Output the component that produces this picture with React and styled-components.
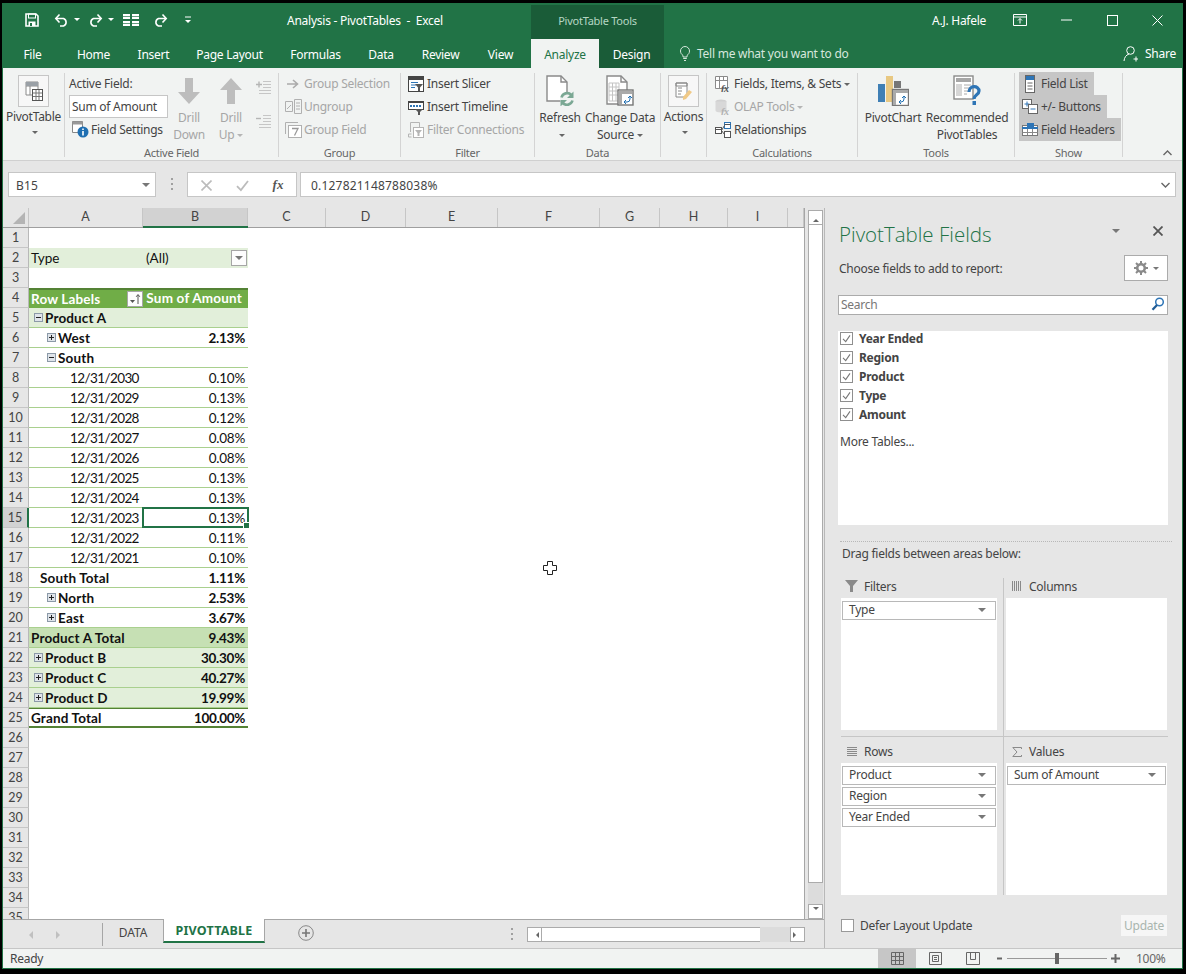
import React from "react";
import styled, { createGlobalStyle } from "styled-components";

const GlobalStyle = createGlobalStyle`
  html, body { margin: 0; padding: 0; background: #000; }
  body { font-family: "Open Sans", "Noto Sans", sans-serif; }
`;

const UI_FONT = `"Noto Sans", "Open Sans", sans-serif`;
const CELL_FONT = `Lato, "Open Sans", sans-serif`;

const Window = styled.div`
  position: relative;
  width: 1179px;
  height: 966px;
  margin: 3px 0 0 2px;
  padding-left: 1px;
  border-right: 1px solid #217346;
  display: flex;
  flex-direction: column;
  overflow: hidden;
  background: #217346;
  font-family: ${UI_FONT};
  font-size: 12px;
  letter-spacing: -0.25px;
  color: #444;
`;

/* title bar + tabs */
const Header = styled.div`
  display: flex;
  height: 65px;
  flex-shrink: 0;
  background: #217346;
  color: #fff;
`;
const HeaderSide = styled.div`
  display: flex;
  flex-direction: column;
  width: ${(p) => (p.$w ? `${p.$w}px` : "auto")};
  flex: ${(p) => (p.$w ? "none" : 1)};
`;
const TitleRow = styled.div`
  display: flex;
  align-items: center;
  box-sizing: border-box;
  height: 36px;
  padding: 0 0 2px ${(p) => p.$pad || 0}px;
`;
const Qat = styled.div`
  display: flex;
  align-items: center;
  width: 262px;
`;
const QatSlot = styled.div`
  display: flex;
  align-items: center;
  margin-right: ${(p) => p.$mr || 0}px;
`;
const DocTitle = styled.div`
  font-size: 12px;
  color: #fff;
  white-space: pre;
`;
const TabRow = styled.div`
  display: flex;
  align-items: stretch;
  height: 29px;
`;
const Tab = styled.div`
  width: ${(p) => p.$w}px;
  box-sizing: border-box;
  padding-top: 1px;
  display: flex;
  align-items: center;
  justify-content: center;
  color: ${(p) => (p.$active ? "#217346" : "#fff")};
  background: ${(p) => (p.$active ? "#f1f3f2" : "transparent")};
`;
const ContextBand = styled.div`
  width: 133px;
  margin-top: 2px;
  background: #1a5c38;
  display: flex;
  flex-direction: column;
`;
const ContextLabel = styled.div`
  height: 34px;
  box-sizing: border-box;
  padding-bottom: 4px;
  display: flex;
  align-items: center;
  justify-content: center;
  font-size: 11px;
  color: #b5d6c3;
`;
const UserRow = styled.div`
  display: flex;
  align-items: center;
  box-sizing: border-box;
  height: 36px;
  padding: 0 0 2px 268px;
`;
const UserName = styled.div`
  width: 81px;
`;
const WinButton = styled.div`
  width: ${(p) => p.$w}px;
  display: flex;
  align-items: center;
`;
const TellRow = styled.div`
  display: flex;
  align-items: center;
  height: 29px;
  padding-left: 16px;
`;
const TellText = styled.div`
  margin-left: 7px;
  width: 426px;
  color: #d6e7dd;
`;
const ShareText = styled.div`
  margin-left: 7px;
`;

/* ribbon */
const Ribbon = styled.div`
  display: flex;
  height: 93px;
  flex-shrink: 0;
  background: #f1f3f2;
  border-bottom: 1px solid #d0d0d0;
  box-sizing: border-box;
`;
const Group = styled.div`
  width: ${(p) => p.$w}px;
  box-sizing: border-box;
  margin-top: 5px;
  height: 84px;
  display: flex;
  flex-direction: column;
  border-right: ${(p) => (p.$last ? "none" : "1px solid #d4d4d4")};
`;
const GroupBody = styled.div`
  flex: 1;
  display: flex;
  align-items: flex-start;
  padding-left: ${(p) => p.$pad || 0}px;
  margin-top: -1px;
`;
const GroupLabel = styled.div`
  height: 14px;
  margin-bottom: -3px;
  line-height: 14px;
  text-align: center;
  font-size: 11px;
  color: #666;
  position: relative;
`;
const Collapse = styled.div`
  position: absolute;
  right: 9px;
  top: 4px;
`;
const SmallStack = styled.div`
  display: flex;
  flex-direction: column;
  align-items: flex-start;
  margin-left: ${(p) => p.$ml || 0}px;
`;
const SmallBtn = styled.div`
  height: 23px;
  display: flex;
  align-items: center;
  gap: 3px;
  white-space: nowrap;
  padding: 0 ${(p) => (p.$on ? 6 : 0)}px 0 ${(p) => (p.$on ? 3 : 0)}px;
  background: ${(p) => (p.$on ? "#c6c6c6" : "transparent")};
  color: ${(p) => (p.$off ? "#a6a6a6" : "#444")};
`;
const IconSlot = styled.div`
  width: ${(p) => p.$w || 16}px;
  height: 16px;
  display: flex;
  align-items: center;
  justify-content: center;
  flex-shrink: 0;
`;
const MiniCaret = styled.span`
  display: inline-block;
  margin-left: 3px;
  vertical-align: middle;
  border-left: 3px solid transparent;
  border-right: 3px solid transparent;
  border-top: 3px solid ${(p) => p.$c || "#666"};
`;
const LargeBtn = styled.div`
  width: ${(p) => p.$w}px;
  margin-left: ${(p) => p.$ml || 0}px;
  display: flex;
  flex-direction: column;
  align-items: center;
  color: ${(p) => (p.$off ? "#a6a6a6" : "#444")};
`;
const LargeIcon = styled.div`
  height: 37px;
  display: flex;
  align-items: center;
  justify-content: center;
`;
const BoxedIcon = styled.div`
  width: 29px;
  height: 30px;
  margin-top: 3px;
  border: 1px solid #c6c6c6;
  background: #f7f7f7;
  display: flex;
  align-items: center;
  justify-content: center;
`;
const BtnLine = styled.div`
  height: 17px;
  line-height: 17px;
  white-space: nowrap;
  margin-top: ${(p) => p.$mt || 0}px;
`;
const ActiveFieldCol = styled.div`
  width: 99px;
  margin-left: 4px;
`;
const ActiveLabel = styled.div`
  height: 23px;
  line-height: 23px;
`;
const ActiveInput = styled.div`
  box-sizing: border-box;
  width: 99px;
  height: 23px;
  padding-left: 2px;
  line-height: 21px;
  background: #fff;
  border: 1px solid #c6c6c6;
  color: #444;
`;
const SettingsRow = styled.div`
  display: flex;
  align-items: center;
  height: 23px;
  padding-left: 3px;
  gap: 2px;
  white-space: nowrap;
`;
const OutlineCol = styled.div`
  display: flex;
  flex-direction: column;
  gap: 18px;
  padding-top: 8px;
  margin-left: 4px;
`;

/* formula bar */
const FormulaBar = styled.div`
  display: flex;
  align-items: flex-start;
  height: 47px;
  box-sizing: border-box;
  flex-shrink: 0;
  padding: 11px 6px 0 5px;
  background: #e6e6e6;
`;
const FormulaBox = styled.div`
  box-sizing: border-box;
  height: 25px;
  width: ${(p) => (p.$w ? `${p.$w}px` : "auto")};
  flex: ${(p) => (p.$w ? "none" : 1)};
  margin-left: ${(p) => p.$ml || 0}px;
  display: flex;
  align-items: center;
  justify-content: ${(p) => (p.$between ? "space-between" : "flex-start")};
  padding: 1px ${(p) => (p.$between ? 5 : 0)}px 0 ${(p) => p.$pl || 0}px;
  background: #fff;
  border: 1px solid #c6c6c6;
  font-size: 12px;
  letter-spacing: 0.2px;
  color: #444;
`;
const Grip = styled.div`
  width: 2px;
  height: 12px;
  margin: 6px 0 0 15px;
  background-image: repeating-linear-gradient(#a0a0a0 0 2px, transparent 2px 5px);
`;
const FxSlot = styled.div`
  width: ${(p) => p.$w}px;
  display: flex;
  justify-content: center;
  color: #555;
`;
const FxGlyph = styled.span`
  font-family: "Liberation Serif", serif;
  font-style: italic;
  font-weight: 700;
  font-size: 13px;
`;

/* main */
const Main = styled.div`
  flex: 1;
  min-height: 0;
  display: flex;
  background: #e6e6e6;
`;
const SheetSide = styled.div`
  width: 822px;
  flex-shrink: 0;
  display: flex;
  flex-direction: column;
  border-right: 1px solid #b8b8b8;
  box-sizing: border-box;
`;
const SheetTop = styled.div`
  height: 711px;
  display: flex;
`;
const Grid = styled.div`
  position: relative;
  width: 801px;
  flex-shrink: 0;
  overflow: hidden;
  background: #fff;
  border-right: 1px solid #a6a6a6;
  font-family: ${CELL_FONT};
  font-size: 13.5px;
  letter-spacing: 0;
  color: #111;
`;
const ColHeaderRow = styled.div`
  display: flex;
  height: 20px;
  box-sizing: border-box;
  background: #e6e6e6;
  border-bottom: 1px solid #9f9f9f;
`;
const Corner = styled.div`
  width: 26px;
  flex-shrink: 0;
  display: flex;
  align-items: flex-end;
  justify-content: flex-end;
  padding: 0 3px 3px 0;
  box-sizing: border-box;
  border-right: 1px solid #c6c6c6;
`;
const ColHead = styled.div`
  width: ${(p) => p.$w}px;
  flex-shrink: 0;
  box-sizing: border-box;
  text-align: center;
  line-height: 18px;
  font-size: 12.5px;
  color: #444;
  border-right: 1px solid #c6c6c6;
  background: ${(p) => (p.$sel ? "#d2d2d2" : "transparent")};
  box-shadow: ${(p) => (p.$sel ? "0 1px 0 #217346, 0 2px 0 #217346" : "none")};
  margin-bottom: ${(p) => (p.$sel ? "1px" : 0)};
`;
const Row = styled.div`
  display: flex;
  height: 20px;
`;
const RowHead = styled.div`
  width: 26px;
  flex-shrink: 0;
  box-sizing: border-box;
  text-align: center;
  line-height: 19px;
  font-size: 12.5px;
  color: #444;
  background: ${(p) => (p.$sel ? "#d2d2d2" : "#e6e6e6")};
  border-bottom: 1px solid #c6c6c6;
  border-right: ${(p) => (p.$sel ? "2px solid #217346" : "1px solid #b8b8b8")};
`;
const ROW_BG = {
  light: "#e2efda",
  mid: "#c6e0b4",
  head: "#70ad47",
};
const Cell = styled.div`
  position: relative;
  width: ${(p) => p.$w}px;
  flex-shrink: 0;
  box-sizing: border-box;
  display: flex;
  align-items: center;
  justify-content: ${(p) =>
    p.$between ? "space-between" : p.$right ? "flex-end" : "flex-start"};
  padding: 0 ${(p) => p.$pr ?? (p.$right ? 3 : 0)}px ${(p) => p.$pb || 0}px ${(p) => p.$pl ?? 2}px;
  font-weight: ${(p) => (p.$bold ? 700 : 400)};
  letter-spacing: ${(p) => p.$ls || 0}px;
  color: ${(p) => (p.$bg === "head" ? "#fff" : "#111")};
  background: ${(p) => ROW_BG[p.$bg] || "transparent"};
  border-bottom: ${(p) => (p.$line ? `${p.$lineW || 1}px solid ${p.$line}` : "none")};
  border-top: ${(p) => (p.$top ? `${p.$topW || 1}px solid ${p.$top}` : "none")};
  white-space: nowrap;
`;
const ExpandBox = styled.span`
  width: 9px;
  height: 9px;
  box-sizing: border-box;
  margin-right: 2px;
  flex-shrink: 0;
  display: flex;
  background: #dfe4ea;
  border: 1px solid #8c9aa8;
`;
const SelectBox = styled.div`
  position: absolute;
  inset: -1px;
  border: 2px solid #217346;
`;
const FillHandle = styled.div`
  position: absolute;
  right: -3px;
  bottom: -3px;
  width: 5px;
  height: 5px;
  background: #217346;
  border: 1px solid #fff;
`;
const PivotButton = styled.div`
  width: 16px;
  height: 16px;
  box-sizing: border-box;
  margin-right: ${(p) => p.$mr || 0}px;
  display: flex;
  align-items: center;
  justify-content: center;
  background: #fdfdfd;
  border: 1px solid #a6a6a6;
`;
const CrossCursor = styled.div`
  position: absolute;
  left: 540px;
  top: 353px;
`;

/* scrollbars */
const VScroll = styled.div`
  width: 14px;
  margin: 2px 0 0 3px;
  display: flex;
  flex-direction: column;
`;
const ScrollBtn = styled.div`
  box-sizing: border-box;
  width: ${(p) => p.$w || 15}px;
  height: ${(p) => p.$h || 15}px;
  flex-shrink: 0;
  display: flex;
  align-items: center;
  justify-content: center;
  background: #fff;
  border: 1px solid #ababab;
`;
const VThumb = styled.div`
  box-sizing: border-box;
  width: 15px;
  height: 659px;
  background: #fff;
  border: 1px solid #ababab;
  border-top: none;
`;
const VTrack = styled.div`
  height: 21px;
  background: #dcdcdc;
  width: 15px;
`;
const Arrow = styled.span`
  width: 0;
  height: 0;
  border-style: solid;
  border-color: transparent;
  border-width: ${(p) => p.$s || 3}px;
  ${(p) => `border-${p.$dir}-color: ${p.$c || "#666"};`}
  ${(p) => `margin-${p.$dir}: -${p.$s || 3}px;`}
`;
const FlatCaret = styled.span`
  display: inline-block;
  border-left: ${(p) => p.$s || 4}px solid transparent;
  border-right: ${(p) => p.$s || 4}px solid transparent;
  border-top: ${(p) => p.$s || 4}px solid ${(p) => p.$c || "#777"};
`;

/* sheet tabs */
const TabsBar = styled.div`
  flex: 1;
  display: flex;
  align-items: flex-start;
  box-sizing: border-box;
  border-top: 1px solid #a6a6a6;
`;
const NavArrows = styled.div`
  width: 100px;
  height: 23px;
  display: flex;
  align-items: center;
  padding-left: 22px;
  gap: 31px;
  box-sizing: border-box;
  border-right: 1px solid #a6a6a6;
  margin-top: 3px;
`;
const SheetTab = styled.div`
  box-sizing: border-box;
  width: ${(p) => p.$w}px;
  height: 24px;
  margin-top: ${(p) => (p.$active ? "-1px" : "0")};
  padding-top: 1px;
  display: flex;
  align-items: center;
  justify-content: center;
  font-size: ${(p) => (p.$active ? "12.5px" : "12px")};
  font-weight: ${(p) => (p.$active ? 700 : 400)};
  letter-spacing: ${(p) => (p.$active ? "0.2px" : "-0.1px")};
  color: ${(p) => (p.$active ? "#217346" : "#444")};
  background: ${(p) => (p.$active ? "#fff" : "transparent")};
  border-left: ${(p) => (p.$active ? "1px solid #a6a6a6" : "none")};
  border-right: ${(p) => (p.$active ? "1px solid #a6a6a6" : "none")};
  border-bottom: ${(p) => (p.$active ? "2px solid #217346" : "none")};
`;
const AddSheet = styled.div`
  margin: 5px 0 0 33px;
  display: flex;
`;
const TabGrip = styled(Grip)`
  margin: 8px 0 0 197px;
`;
const HScroll = styled.div`
  display: flex;
  align-items: center;
  margin: 7px 0 0 14px;
`;
const HThumb = styled.div`
  box-sizing: border-box;
  width: 218px;
  height: 15px;
  background: #fff;
  border-top: 1px solid #ababab;
  border-bottom: 1px solid #ababab;
`;
const HTrack = styled.div`
  width: 30px;
  height: 15px;
  background: #dcdcdc;
`;

/* field panel */
const Panel = styled.div`
  flex: 1;
  box-sizing: border-box;
  padding: 14px 14px 0 13px;
  display: flex;
  flex-direction: column;
`;
const PanelTitleRow = styled.div`
  height: 24px;
  display: flex;
  align-items: center;
  padding-left: 1px;
`;
const PanelTitle = styled.div`
  flex: 1;
  font-size: 20.5px;
  letter-spacing: 0;
  color: #217346;
  font-weight: 300;
  font-family: "Open Sans", sans-serif;
`;
const PanelClose = styled.div`
  display: flex;
  align-items: center;
  gap: 33px;
  margin: -6px 5px 0 0;
`;
const ChooseRow = styled.div`
  height: 26px;
  margin-top: 9px;
  display: flex;
  align-items: center;
  justify-content: space-between;
  padding-left: 1px;
`;
const GearButton = styled.div`
  box-sizing: border-box;
  width: 44px;
  height: 26px;
  display: flex;
  align-items: center;
  justify-content: center;
  gap: 5px;
  background: #fff;
  border: 1px solid #ababab;
`;
const SearchBox = styled.div`
  box-sizing: border-box;
  height: 20px;
  margin-top: 14px;
  padding: 0 2px 2px 2px;
  display: flex;
  align-items: center;
  justify-content: space-between;
  background: #fff;
  border: 1px solid #ababab;
  color: #777;
`;
const FieldList = styled.div`
  height: 194px;
  margin-top: 16px;
  padding-left: 2px;
  box-sizing: border-box;
  background: #fff;
`;
const FieldRow = styled.div`
  height: 19px;
  display: flex;
  align-items: center;
  gap: 6px;
  font-weight: 700;
  color: #444;
  &:first-child {
    height: 15px;
    margin-bottom: 2px;
  }
`;
const CheckBox = styled.div`
  box-sizing: border-box;
  width: 13px;
  height: 13px;
  flex-shrink: 0;
  display: flex;
  align-items: center;
  justify-content: center;
  background: #fff;
  border: 1px solid #8f8f8f;
`;
const MoreTables = styled.div`
  margin-top: 8px;
  line-height: 19px;
`;
const Dotted = styled.div`
  margin: 16px -4px 0 2px;
  border-top: 1px dotted #b8b8b8;
`;
const DragLabel = styled.div`
  margin: 5px 0 0 4px;
  line-height: 14px;
`;
const Areas = styled.div`
  margin: 17px 0 0 3px;
`;
const AreaRow = styled.div`
  display: flex;
  border-bottom: ${(p) => (p.$line ? "1px solid #c6c6c6" : "none")};
`;
const AreaCell = styled.div`
  width: ${(p) => p.$w}px;
  padding-right: ${(p) => (p.$left ? 6 : 0)}px;
  padding-left: ${(p) => (p.$left ? 0 : 2)}px;
  padding-bottom: ${(p) => p.$pb || 0}px;
  border-right: ${(p) => (p.$left ? "1px solid #c6c6c6" : "none")};
`;
const AreaHead = styled.div`
  height: ${(p) => p.$h}px;
  padding: ${(p) => p.$pt || 0}px 0 ${(p) => p.$pb || 0}px 4px;
  box-sizing: border-box;
  display: flex;
  align-items: center;
  gap: 6px;
`;
const AreaIcon = styled.div`
  width: 13px;
  display: flex;
  justify-content: center;
  flex-shrink: 0;
`;
const AreaBox = styled.div`
  height: 132px;
  padding: 3px 1px 0;
  box-sizing: border-box;
  background: #fff;
  display: flex;
  flex-direction: column;
  gap: 2px;
`;
const AreaItem = styled.div`
  box-sizing: border-box;
  height: 19px;
  display: flex;
  align-items: center;
  justify-content: space-between;
  padding: 0 9px 2px 6px;
  background: #fff;
  border: 1px solid #b8b8b8;
`;
const PanelFooter = styled.div`
  margin: 20px 0 0 3px;
  height: 21px;
  display: flex;
  align-items: center;
`;
const DeferBox = styled(CheckBox)`
  border-color: #999;
`;
const DeferText = styled.div`
  flex: 1;
  margin-left: 6px;
`;
const UpdateBtn = styled.div`
  width: 46px;
  height: 21px;
  margin-right: 1px;
  line-height: 21px;
  text-align: center;
  background: #f6f6f6;
  color: #a9b5ae;
`;

/* status bar */
const StatusBar = styled.div`
  height: 21px;
  flex-shrink: 0;
  display: flex;
  align-items: center;
  box-sizing: border-box;
  background: #f1f3f2;
  border-top: 1px solid #c6c6c6;
  border-bottom: 1px solid #217346;
  padding-left: 7px;
`;
const StatusText = styled.div`
  width: 868px;
`;
const ViewBtn = styled.div`
  width: 38px;
  height: 19px;
  display: flex;
  align-items: center;
  justify-content: center;
  background: ${(p) => (p.$on ? "#c6c6c6" : "transparent")};
`;
const Zoom = styled.div`
  display: flex;
  align-items: center;
  margin-left: 4px;
`;
const SliderTrack = styled.div`
  position: relative;
  width: 100px;
  height: 1px;
  margin: 0 4px;
  background: #999;
`;
const SliderThumb = styled.div`
  position: absolute;
  left: 48px;
  top: -5px;
  width: 4px;
  height: 11px;
  background: #666;
`;
const ZoomValue = styled.div`
  margin-left: 16px;
  color: #666;
`;

/* icons */
const W = "#fff";
const Svg = ({ w, h = w, children }) => (
  <svg width={w} height={h} viewBox={`0 0 ${w} ${h}`} fill="none" style={{ display: "block", flexShrink: 0 }}>
    {children}
  </svg>
);
const SaveIcon = () => (
  <Svg w={14}>
    <path d="M1 1h10l2 2v10H1z" stroke={W} strokeWidth="1.6" />
    <rect x="3.5" y="1" width="7" height="4" stroke={W} />
    <rect x="3.5" y="8.5" width="7" height="4.5" fill={W} />
    <rect x="5" y="10" width="2" height="3" fill="#217346" />
  </Svg>
);
const UndoIcon = ({ flip }) => (
  <Svg w={15} h={14}>
    <g transform={flip ? "translate(15 0) scale(-1 1)" : undefined}>
      <path d="M2.5 5.5h7a4 4 0 0 1 0 7.5H6" stroke={W} strokeWidth="1.6" />
      <path d="M5.5 1.5 1.8 5.5l3.7 4" stroke={W} strokeWidth="1.6" />
    </g>
  </Svg>
);
const QatTable = () => (
  <Svg w={16} h={14}>
    <path d="M0 1h7v5H0zM9 1h7v5H9zM0 8h7v5H0zM9 8h7v5H9z" fill={W} />
    <path d="M0 3.5h7M9 3.5h7M0 10.5h7M9 10.5h7" stroke="#217346" strokeWidth=".7" />
  </Svg>
);
const QatCustom = () => (
  <Svg w={8} h={8}>
    <path d="M1 1h6" stroke={W} />
    <path d="M1 4h6L4 7z" fill={W} />
  </Svg>
);
const TinyCaret = () => (
  <Svg w={6} h={4}>
    <path d="M0 0h6L3 3z" fill={W} />
  </Svg>
);
const RibbonDisplay = () => (
  <Svg w={14} h={12}>
    <path d="M.5.5h13v11H.5zM.5 3h13" stroke={W} />
    <path d="M7 9.5v-5M5 6.5l2-2 2 2" stroke={W} />
  </Svg>
);
const MinIcon = () => <Svg w={11} h={2}><path d="M0 1h11" stroke={W} /></Svg>;
const MaxIcon = () => <Svg w={11}><rect x=".5" y=".5" width="10" height="10" stroke={W} /></Svg>;
const CloseIcon = ({ c = W, w = 11, sw = 1 }) => (
  <Svg w={w}><path d={`M.5.5l${w - 1} ${w - 1}M${w - 0.5} .5l-${w - 1} ${w - 1}`} stroke={c} strokeWidth={sw} /></Svg>
);
const BulbIcon = () => (
  <Svg w={10} h={15}>
    <path d="M3 11V9.5C1.5 8.3.5 7 .5 5a4.5 4.5 0 0 1 9 0c0 2-1 3.3-2.5 4.5V11z" stroke="#d6e7dd" />
    <path d="M3.2 12.5h3.6M4 14.5h2" stroke="#d6e7dd" />
  </Svg>
);
const ShareIcon = () => (
  <Svg w={15} h={16}>
    <circle cx="7.5" cy="4.5" r="3.8" stroke={W} />
    <path d="M1 15c.3-3.5 2-6 5-7M13 10.5v5M10.5 13h5" stroke={W} />
  </Svg>
);
const PivotIcon = () => (
  <Svg w={18} h={20}>
    <path d="M1 1h12v13H1z" fill="#fff" stroke="#8a8a8a" />
    <path d="M1 5h12M5 1v13" stroke="#8a8a8a" />
    <path d="M1 1h12v4H1z" fill="#9aa0a6" />
    <rect x="7.5" y="8.5" width="10" height="11" fill="#fff" stroke="#555" />
    <path d="M8 12h9M11 9v10M14 9v10M8 15.5h9" stroke="#777" />
  </Svg>
);
const ArrowDown = ({ up }) => (
  <Svg w={24} h={28}>
    <path d={up ? "M12 1 23 13H16v14H8V13H1z" : "M8 1h8v14h7L12 27 1 15h7z"} fill="#bdbdbd" />
  </Svg>
);
const OutlineIcon = ({ minus }) => (
  <Svg w={16}>
    <path d={minus ? "M0 4.5h5" : "M0 4.5h6M3 1.5v6"} stroke="#b5b5b5" strokeWidth="1.4" />
    <path d="M7 1.5h8M7 4.5h8M7 7.5h8M3 10.5h12M3 13.5h12" stroke="#c6c6c6" />
  </Svg>
);
const SettingsIcon = () => (
  <Svg w={17}>
    <path d="M.5.5h10v11H.5z" fill="#fff" stroke="#888" />
    <path d="M.5.5h10v3H.5z" fill="#999" />
    <circle cx="11" cy="11" r="5.5" fill="#1f6fb2" />
    <path d="M11 7.5V9M11 10v4.5" stroke="#fff" strokeWidth="1.6" />
  </Svg>
);
const GroupSelIcon = () => (
  <Svg w={14} h={12}>
    <path d="M1 6h10M7 2l4.5 4L7 10" stroke="#ababab" strokeWidth="1.6" />
  </Svg>
);
const UngroupIcon = () => (
  <Svg w={17} h={15}>
    <path d="M.5 2.5h7v10h-7zM9.5.5h7v14h-7z" stroke="#b0b0b0" />
    <path d="M2 10l4-4M11 4h4M11 7h4M11 10h4" stroke="#b0b0b0" />
  </Svg>
);
const GroupFieldIcon = () => (
  <Svg w={17} h={16}>
    <path d="M.5 12V.5H13" stroke="#b0b0b0" />
    <rect x="3.5" y="3.5" width="13" height="12" fill="#fff" stroke="#b0b0b0" />
    <path d="M7 6.5h6l-3.5 7" stroke="#999" strokeWidth="1.3" />
  </Svg>
);
const SlicerIcon = () => (
  <Svg w={16}>
    <rect x=".5" y=".5" width="15" height="15" fill="#fff" stroke="#444" />
    <path d="M1 1h14v3H1z" fill="#444" />
    <path d="M3 6.5h7M3 9h5M3 11.5h4" stroke="#2e75b6" />
    <path d="M7 8h8l-3 3.5V15h-2v-3.5z" fill="#555" />
  </Svg>
);
const TimelineIcon = () => (
  <Svg w={16}>
    <rect x=".5" y="2.5" width="15" height="8" fill="#fff" stroke="#444" />
    <path d="M1 2h14v2H1z" fill="#444" />
    <path d="M2 7h2M5 7h2M8 7h2M11 7h2" stroke="#2e75b6" strokeWidth="2" />
    <path d="M7 10h8l-3 3v3h-2v-3z" fill="#555" />
  </Svg>
);
const FilterConnIcon = () => (
  <Svg w={16}>
    <path d="M2.5 10V.5h9v5" stroke="#b5b5b5" />
    <path d="M.5 12h3M.5 15h3M.5 12v3" stroke="#b5b5b5" />
    <rect x="5.5" y="5.5" width="10" height="10" fill="#fff" stroke="#b5b5b5" />
    <path d="M7 8h7l-2.5 3v3h-2v-3z" fill="#b5b5b5" />
  </Svg>
);
const RefreshIcon = () => (
  <Svg w={28} h={31}>
    <path d="M1 1h14l6 6v19H1z" fill="#fff" stroke="#8a8a8a" strokeWidth="1.4" />
    <path d="M15 1v6h6" stroke="#8a8a8a" strokeWidth="1.4" />
    <circle cx="21" cy="24" r="7" fill="#f1f3f2" />
    <path d="M15.5 22.5a5.8 5.8 0 0 1 9.8-2.5" stroke="#7ba894" strokeWidth="2.6" />
    <path d="M27.5 16.5V23H21z" fill="#7ba894" />
    <path d="M26.5 25.5a5.8 5.8 0 0 1-9.8 2.5" stroke="#7ba894" strokeWidth="2.6" />
    <path d="M14.5 31.5V25H21z" fill="#7ba894" />
  </Svg>
);
const ChangeSourceIcon = () => (
  <Svg w={28} h={31}>
    <path d="M1 1h14l6 6v22H1z" fill="#fff" stroke="#8a8a8a" strokeWidth="1.4" />
    <path d="M15 1v6h6" stroke="#8a8a8a" strokeWidth="1.4" />
    <path d="M3 8h10v18H3zM3 12h10M3 16h10M3 20h10M6.5 8v18M10 8v18" stroke="#c4c4c4" />
    <rect x="12" y="15" width="15" height="15" fill="#fff" stroke="#777" strokeWidth="1.4" />
    <path d="M13 16h13v3H13zM13 19h3v10h-3z" fill="#aaa" />
    <path d="M18 27h3a3 3 0 0 0 3-3v-3M22 23l2-2 2 2M20 25l-2 2 2 2" stroke="#1f6fb2" />
  </Svg>
);
const ActionsIcon = () => (
  <Svg w={17} h={20}>
    <path d="M1 2h11v14H1z" fill="#fff" stroke="#8a8a8a" />
    <path d="M1 2h11v3H1zM3 7h4M3 10h4M3 13h3" stroke="#888" />
    <path d="M8 16l6-7 3 2-6 7-3 1z" fill="#f0c987" />
  </Svg>
);
const FxMark = ({ c }) => (
  <text x="6" y="15.5" fontSize="10" fontStyle="italic" fontWeight="700" fontFamily="Liberation Serif" fill={c}>fx</text>
);
const FieldsIcon = () => (
  <Svg w={16}>
    <path d="M.5.5h12v12H.5z" fill="#fff" stroke="#8a8a8a" />
    <path d="M.5 4.5h12M4.5 1v11M8.5 1v4" stroke="#8a8a8a" />
    <FxMark c="#555" />
  </Svg>
);
const OlapIcon = () => (
  <Svg w={16}>
    <ellipse cx="6" cy="2.5" rx="5.5" ry="2" fill="#d0d0d0" />
    <path d="M.5 2.5v9c0 1 2 2 5.5 2s5.5-1 5.5-2v-9" fill="#d8d8d8" />
    <FxMark c="#b0b0b0" />
  </Svg>
);
const RelationsIcon = () => (
  <Svg w={16}>
    <rect x=".5" y="5.5" width="6" height="6" fill="#fff" stroke="#555" />
    <rect x="9.5" y=".5" width="6" height="6" fill="#fff" stroke="#2e75b6" />
    <rect x="9.5" y="9.5" width="6" height="6" fill="#fff" stroke="#555" />
    <path d="M6.5 8.5l3-5M6.5 8.5l3 4M.5 7.5h6M9.5 2.5h6" stroke="#555" />
  </Svg>
);
const PivotChartIcon = () => (
  <Svg w={32} h={30}>
    <rect x="1" y="8" width="7" height="18" fill="#3f7fb5" />
    <rect x="9" y="0" width="7" height="26" fill="#e8c882" />
    <rect x="17" y="5" width="7" height="7" fill="#777" />
    <rect x="15.5" y="13.5" width="16" height="16" fill="#fff" stroke="#777" strokeWidth="1.4" />
    <path d="M16 14h15v3H16zM16 17h3v12h-3z" fill="#aaa" />
    <path d="M22 26h2a3 3 0 0 0 3-3v-3M25 22l2-2 2 2M24 24l-2 2 2 2" stroke="#1f6fb2" />
  </Svg>
);
const RecommendIcon = () => (
  <Svg w={28} h={31}>
    <rect x="1" y="1" width="19" height="23" fill="#fff" stroke="#8a8a8a" strokeWidth="1.4" />
    <path d="M3 3h15v4H3z" fill="#a6a6a6" />
    <path d="M3 9h6v12H3z" fill="#d6d6d6" />
    <path d="M11 10h7M11 13h7M11 16h4M11 19h3" stroke="#aaa" />
    <path d="M16 17c0-7 10-7 10-1 0 4-5 3.5-5 8" stroke="#2e75b6" strokeWidth="3.2" />
    <rect x="19.5" y="26" width="3.5" height="4" fill="#2e75b6" />
  </Svg>
);
const FieldListIcon = () => (
  <Svg w={10} h={18}>
    <rect x=".5" y=".5" width="9" height="17" fill="#fff" stroke="#666" />
    <path d="M1 1h8v4H1z" fill="#2e75b6" />
    <path d="M2.5 8h5M2.5 11h5M2.5 14h5" stroke="#666" />
  </Svg>
);
const PlusMinusIcon = () => (
  <Svg w={16} h={15}>
    <rect x=".5" y=".5" width="9" height="9" fill="#fff" stroke="#666" />
    <path d="M2.5 5h5M5 2.5v5" stroke="#2e75b6" />
    <rect x="6.5" y="5.5" width="9" height="9" fill="#fff" stroke="#666" />
    <path d="M8.5 10h5" stroke="#2e75b6" />
  </Svg>
);
const HeadersIcon = () => (
  <Svg w={16} h={13}>
    <rect x=".5" y="2.5" width="15" height="10" fill="#fff" stroke="#777" />
    <path d="M5 0h7v4H5zM0 4h16v2H0z" fill="#2e75b6" />
    <path d="M.5 9.5h15M5.5 6v6M10.5 6v6" stroke="#888" />
  </Svg>
);
const Chevron = ({ up }) => (
  <Svg w={9} h={6}>
    <path d={up ? "M.5 5l4-4 4 4" : "M.5 1l4 4 4-4"} stroke="#666" strokeWidth="1.4" />
  </Svg>
);
const XGlyph = () => (
  <Svg w={11}><path d="M.5.5l10 10M10.5.5l-10 10" stroke="#bcbcbc" strokeWidth="1.6" /></Svg>
);
const CheckGlyph = ({ c = "#bcbcbc", w = 13, sw = 1.8 }) => (
  <Svg w={w}><path d={`M1 ${w * 0.55}l${w * 0.3} ${w * 0.3}L${w - 1} ${w * 0.15}`} stroke={c} strokeWidth={sw} /></Svg>
);
const PlusMinus = ({ plus }) => (
  <Svg w={7}>
    <path d={plus ? "M1 3.5h5M3.5 1v5" : "M1 3.5h5"} stroke="#222" />
  </Svg>
);
const SortIcon = () => (
  <Svg w={12}>
    <path d="M1 7h5L3.5 10z" fill="#555" />
    <path d="M9 11V2M7.2 3.8 9 1.5l1.8 2.3" stroke="#555" />
  </Svg>
);
const CellCursor = () => (
  <Svg w={14}>
    <path d="M4.5.5h5v4h4v5h-4v4h-5v-4h-4v-5h4z" fill="#fff" stroke="#222" />
  </Svg>
);
const PlusCircle = () => (
  <Svg w={16}>
    <circle cx="8" cy="8" r="7.3" stroke="#888" />
    <path d="M4 8h8M8 4v8" stroke="#777" strokeWidth="1.6" />
  </Svg>
);
const GearIcon = () => (
  <Svg w={14}>
    <circle cx="7" cy="7" r="3.8" stroke="#8a8a8a" strokeWidth="2.6" />
    <path d="M7 0v3M7 11v3M0 7h3M11 7h3M2 2l2 2M10 10l2 2M12 2l-2 2M4 10l-2 2" stroke="#8a8a8a" strokeWidth="2" />
  </Svg>
);
const SearchIcon = () => (
  <Svg w={14}>
    <circle cx="8.5" cy="5" r="3.8" stroke="#2e75b6" strokeWidth="1.5" />
    <path d="M6 8l-4.5 4.8" stroke="#1f5c96" strokeWidth="2.2" />
  </Svg>
);
const FilterGlyph = () => (
  <Svg w={13} h={12}><path d="M0 0h13L8 6v6H5V6z" fill="#8a8a8a" /></Svg>
);
const ColumnsGlyph = () => (
  <Svg w={10}>
    <path d="M.5 0v10M2.5 0v10M4.5 0v10M6.5 0v10M8.5 0v10" stroke="#8a8a8a" />
  </Svg>
);
const RowsGlyph = () => (
  <Svg w={10}>
    <path d="M0 .5h10M0 2.5h10M0 4.5h10M0 6.5h10M0 8.5h10" stroke="#8a8a8a" />
  </Svg>
);
const SigmaGlyph = () => (
  <Svg w={10}>
    <path d="M9.5 2V.5H.8L5 5 .8 9.5h8.7V8" stroke="#8a8a8a" />
  </Svg>
);
const NormalView = () => (
  <Svg w={13}>
    <path d="M.5.5h12v12H.5zM4.5 1v11M8.5 1v11M1 4.5h11M1 8.5h11" stroke="#666" />
  </Svg>
);
const PageView = () => (
  <Svg w={13}>
    <path d="M.5.5h12v12H.5z" stroke="#666" />
    <path d="M3.5 3.5h6v6h-6zM5 5.5h3M5 7.5h3" stroke="#666" />
  </Svg>
);
const BreakView = () => (
  <Svg w={14} h={13}>
    <path d="M.5.5h13v12H.5zM4.5 1v6.5h5V1" stroke="#666" />
  </Svg>
);
const ZoomMinus = () => <Svg w={7}><path d="M1 3.5h5" stroke="#666" strokeWidth="2" /></Svg>;
const ZoomPlus = () => <Svg w={9}><path d="M0 4.5h9M4.5 0v9" stroke="#666" strokeWidth="2" /></Svg>;

/* data */
const FILE_TABS = [
  ["File", 59], ["Home", 63], ["Insert", 57], ["Page Layout", 95],
  ["Formulas", 77], ["Data", 54], ["Review", 65], ["View", 55],
];
const COLS = [["A", 114], ["B", 105, true], ["C", 78], ["D", 80], ["E", 92], ["F", 102], ["G", 60], ["H", 68], ["I", 60], ["", 16]];
const GREEN_LINE = "#a9d08e";
const DARK_LINE = "#548235";

const DATES = [
  ["12/31/2030", "0.10%"], ["12/31/2029", "0.13%"], ["12/31/2028", "0.12%"], ["12/31/2027", "0.08%"],
  ["12/31/2026", "0.08%"], ["12/31/2025", "0.13%"], ["12/31/2024", "0.13%"], ["12/31/2023", "0.13%"],
  ["12/31/2022", "0.11%"], ["12/31/2021", "0.10%"],
];

const ROWS = [
  {},
  { kind: "filter" },
  {},
  { kind: "head" },
  { a: "Product A", b: "", box: "minus", pl: 5, bg: "light", bold: true },
  { a: "West", b: "2.13%", box: "plus", pl: 18, bold: true },
  { a: "South", b: "", box: "minus", pl: 18, bold: true },
  ...DATES.map(([a, b], i) => ({ a, b, pl: 41, sel: i === 7 })),
  { a: "South Total", b: "1.11%", pl: 11, bold: true },
  { a: "North", b: "2.53%", box: "plus", pl: 18, bold: true },
  { a: "East", b: "3.67%", box: "plus", pl: 18, bold: true },
  { a: "Product A Total", b: "9.43%", bg: "mid", bold: true },
  { a: "Product B", b: "30.30%", box: "plus", pl: 5, bg: "light", bold: true },
  { a: "Product C", b: "40.27%", box: "plus", pl: 5, bg: "light", bold: true },
  { a: "Product D", b: "19.99%", box: "plus", pl: 5, bg: "light", bold: true },
  { kind: "grand" },
];

const renderCells = (r) => {
  if (r.kind === "filter") {
    return (
      <>
        <Cell $w={114} $bg="light">Type</Cell>
        <Cell $w={105} $bg="light" $between $pl={3}>
          (All)
          <PivotButton $mr={1}><FlatCaret $s={4} /></PivotButton>
        </Cell>
      </>
    );
  }
  if (r.kind === "head") {
    return (
      <>
        <Cell $w={114} $bg="head" $bold $between $ls={0.15} $pb={1} $top={DARK_LINE} $topW={2}>
          Row Labels
          <PivotButton><SortIcon /></PivotButton>
        </Cell>
        <Cell $w={105} $bg="head" $bold $right $pr={6} $pb={2} $ls={0.2} $top={DARK_LINE} $topW={2}>Sum of Amount</Cell>
      </>
    );
  }
  if (r.kind === "grand") {
    return (
      <>
        <Cell $w={114} $bold $ls={0.15} $top={DARK_LINE} $line={DARK_LINE} $lineW={2}>Grand Total</Cell>
        <Cell $w={105} $bold $right $ls={-0.35} $top={DARK_LINE} $line={DARK_LINE} $lineW={2}>100.00%</Cell>
      </>
    );
  }
  if (!r.a) return null;
  return (
    <>
      <Cell $w={114} $pl={r.pl} $bg={r.bg} $bold={r.bold} $ls={r.bold ? 0.15 : -0.6} $line={GREEN_LINE}>
        {r.box && (
          <ExpandBox><PlusMinus plus={r.box === "plus"} /></ExpandBox>
        )}
        {r.a}
      </Cell>
      <Cell $w={105} $bg={r.bg} $bold={r.bold} $right $ls={-0.25} $line={GREEN_LINE}>
        {r.b}
        {r.sel && (
          <SelectBox><FillHandle /></SelectBox>
        )}
      </Cell>
    </>
  );
};

const Small = ({ icon, children, off, on, caret }) => (
  <SmallBtn $off={off} $on={on}>
    <IconSlot>{icon}</IconSlot>
    <span>
      {children}
      {caret && <MiniCaret $c={off ? "#b5b5b5" : "#666"} />}
    </span>
  </SmallBtn>
);

export default function App() {
  return (
    <>
      <GlobalStyle />
      <Window>
        <Header>
          <HeaderSide $w={528}>
            <TitleRow $pad={22}>
              <Qat>
                <QatSlot $mr={15}><SaveIcon /></QatSlot>
                <QatSlot $mr={5}><UndoIcon /></QatSlot>
                <QatSlot $mr={8}><TinyCaret /></QatSlot>
                <QatSlot $mr={5}><UndoIcon flip /></QatSlot>
                <QatSlot $mr={9}><TinyCaret /></QatSlot>
                <QatSlot $mr={14}><QatTable /></QatSlot>
                <QatSlot $mr={16}><UndoIcon flip /></QatSlot>
                <QatSlot><QatCustom /></QatSlot>
              </Qat>
              <DocTitle>{"Analysis - PivotTables  -  Excel"}</DocTitle>
            </TitleRow>
            <TabRow>
              {FILE_TABS.map(([t, w]) => (
                <Tab key={t} $w={w}>{t}</Tab>
              ))}
            </TabRow>
          </HeaderSide>
          <ContextBand>
            <ContextLabel>PivotTable Tools</ContextLabel>
            <TabRow>
              <Tab $w={68} $active>Analyze</Tab>
              <Tab $w={65}>Design</Tab>
            </TabRow>
          </ContextBand>
          <HeaderSide>
            <UserRow>
              <UserName>A.J. Hafele</UserName>
              <WinButton $w={48}><RibbonDisplay /></WinButton>
              <WinButton $w={46}><MinIcon /></WinButton>
              <WinButton $w={45}><MaxIcon /></WinButton>
              <WinButton $w={11}><CloseIcon /></WinButton>
            </UserRow>
            <TellRow>
              <BulbIcon />
              <TellText>Tell me what you want to do</TellText>
              <ShareIcon />
              <ShareText>Share</ShareText>
            </TellRow>
          </HeaderSide>
        </Header>

        <Ribbon>
          <Group $w={62}>
            <GroupBody>
              <LargeBtn $w={61}>
                <BoxedIcon><PivotIcon /></BoxedIcon>
                <BtnLine $mt={1}>PivotTable</BtnLine>
                <BtnLine $mt={-2}><MiniCaret /></BtnLine>
              </LargeBtn>
            </GroupBody>
            <GroupLabel />
          </Group>

          <Group $w={214}>
            <GroupBody>
              <ActiveFieldCol>
                <ActiveLabel>Active Field:</ActiveLabel>
                <ActiveInput>Sum of Amount</ActiveInput>
                <SettingsRow>
                  <SettingsIcon />
                  <span>Field Settings</span>
                </SettingsRow>
              </ActiveFieldCol>
              <LargeBtn $w={42} $off>
                <LargeIcon><ArrowDown /></LargeIcon>
                <BtnLine>Drill</BtnLine>
                <BtnLine>Down</BtnLine>
              </LargeBtn>
              <LargeBtn $w={42} $off>
                <LargeIcon><ArrowDown up /></LargeIcon>
                <BtnLine>Drill</BtnLine>
                <BtnLine>Up<MiniCaret $c="#b5b5b5" /></BtnLine>
              </LargeBtn>
              <OutlineCol>
                <OutlineIcon />
                <OutlineIcon minus />
              </OutlineCol>
            </GroupBody>
            <GroupLabel>Active Field</GroupLabel>
          </Group>

          <Group $w={122}>
            <GroupBody>
              <SmallStack $ml={6}>
                <Small off icon={<GroupSelIcon />}>Group Selection</Small>
                <Small off icon={<UngroupIcon />}>Ungroup</Small>
                <Small off icon={<GroupFieldIcon />}>Group Field</Small>
              </SmallStack>
            </GroupBody>
            <GroupLabel>Group</GroupLabel>
          </Group>

          <Group $w={134}>
            <GroupBody>
              <SmallStack $ml={7}>
                <Small icon={<SlicerIcon />}>Insert Slicer</Small>
                <Small icon={<TimelineIcon />}>Insert Timeline</Small>
                <Small off icon={<FilterConnIcon />}>Filter Connections</Small>
              </SmallStack>
            </GroupBody>
            <GroupLabel>Filter</GroupLabel>
          </Group>

          <Group $w={126}>
            <GroupBody>
              <LargeBtn $w={50}>
                <LargeIcon><RefreshIcon /></LargeIcon>
                <BtnLine>Refresh</BtnLine>
                <BtnLine><MiniCaret /></BtnLine>
              </LargeBtn>
              <LargeBtn $w={70}>
                <LargeIcon><ChangeSourceIcon /></LargeIcon>
                <BtnLine>Change Data</BtnLine>
                <BtnLine>Source<MiniCaret /></BtnLine>
              </LargeBtn>
            </GroupBody>
            <GroupLabel>Data</GroupLabel>
          </Group>

          <Group $w={46}>
            <GroupBody>
              <LargeBtn $w={46}>
                <BoxedIcon><ActionsIcon /></BoxedIcon>
                <BtnLine $mt={1}>Actions</BtnLine>
                <BtnLine $mt={-2}><MiniCaret /></BtnLine>
              </LargeBtn>
            </GroupBody>
            <GroupLabel />
          </Group>

          <Group $w={151}>
            <GroupBody>
              <SmallStack $ml={8}>
                <Small caret icon={<FieldsIcon />}>Fields, Items, &amp; Sets</Small>
                <Small off caret icon={<OlapIcon />}>OLAP Tools</Small>
                <Small icon={<RelationsIcon />}>Relationships</Small>
              </SmallStack>
            </GroupBody>
            <GroupLabel>Calculations</GroupLabel>
          </Group>

          <Group $w={157}>
            <GroupBody $pad={3}>
              <LargeBtn $w={64}>
                <LargeIcon><PivotChartIcon /></LargeIcon>
                <BtnLine>PivotChart</BtnLine>
              </LargeBtn>
              <LargeBtn $w={84}>
                <LargeIcon><RecommendIcon /></LargeIcon>
                <BtnLine>Recommended</BtnLine>
                <BtnLine>PivotTables</BtnLine>
              </LargeBtn>
            </GroupBody>
            <GroupLabel>Tools</GroupLabel>
          </Group>

          <Group $w={108}>
            <GroupBody>
              <SmallStack $ml={4}>
                <Small on icon={<FieldListIcon />}>Field List</Small>
                <Small on icon={<PlusMinusIcon />}>+/- Buttons</Small>
                <Small on icon={<HeadersIcon />}>Field Headers</Small>
              </SmallStack>
            </GroupBody>
            <GroupLabel>Show</GroupLabel>
          </Group>

          <Group $w={58} $last>
            <GroupBody />
            <GroupLabel>
              <Collapse><Chevron up /></Collapse>
            </GroupLabel>
          </Group>
        </Ribbon>

        <FormulaBar>
          <FormulaBox $w={148} $pl={7} $between>
            B15
            <FlatCaret $s={4} $c="#777" />
          </FormulaBox>
          <Grip />
          <FormulaBox $w={110} $ml={14}>
            <FxSlot $w={36}><XGlyph /></FxSlot>
            <FxSlot $w={36}><CheckGlyph /></FxSlot>
            <FxSlot $w={36}><FxGlyph>fx</FxGlyph></FxSlot>
          </FormulaBox>
          <FormulaBox $ml={3} $pl={10} $between>
            0.127821148788038%
            <Chevron />
          </FormulaBox>
        </FormulaBar>

        <Main>
          <SheetSide>
            <SheetTop>
              <Grid>
                <ColHeaderRow>
                  <Corner>
                    <Svg w={12}><path d="M12 0v12H0z" fill="#b4b4b4" /></Svg>
                  </Corner>
                  {COLS.map(([c, w, sel]) => (
                    <ColHead key={c || "j"} $w={w} $sel={sel}>{c}</ColHead>
                  ))}
                </ColHeaderRow>
                {Array.from({ length: 35 }, (_, i) => {
                  const r = ROWS[i] || {};
                  return (
                    <Row key={i}>
                      <RowHead $sel={i === 14}>{i + 1}</RowHead>
                      {renderCells(r)}
                    </Row>
                  );
                })}
                <CrossCursor><CellCursor /></CrossCursor>
              </Grid>
              <VScroll>
                <ScrollBtn><Arrow $dir="bottom" /></ScrollBtn>
                <VThumb />
                <VTrack />
                <ScrollBtn><Arrow $dir="top" /></ScrollBtn>
              </VScroll>
            </SheetTop>
            <TabsBar>
              <NavArrows>
                <Arrow $dir="right" $s={4} $c="#c0c0c0" />
                <Arrow $dir="left" $s={4} $c="#c0c0c0" />
              </NavArrows>
              <SheetTab $w={60}>DATA</SheetTab>
              <SheetTab $w={102} $active>PIVOTTABLE</SheetTab>
              <AddSheet><PlusCircle /></AddSheet>
              <TabGrip />
              <HScroll>
                <ScrollBtn><Arrow $dir="right" /></ScrollBtn>
                <HThumb />
                <HTrack />
                <ScrollBtn><Arrow $dir="left" /></ScrollBtn>
              </HScroll>
            </TabsBar>
          </SheetSide>

          <Panel>
            <PanelTitleRow>
              <PanelTitle>PivotTable Fields</PanelTitle>
              <PanelClose>
                <FlatCaret $s={4} $c="#777" />
                <CloseIcon c="#555" w={10} sw={1.8} />
              </PanelClose>
            </PanelTitleRow>
            <ChooseRow>
              Choose fields to add to report:
              <GearButton>
                <GearIcon />
                <FlatCaret $s={3} $c="#777" />
              </GearButton>
            </ChooseRow>
            <SearchBox>
              Search
              <SearchIcon />
            </SearchBox>
            <FieldList>
              {["Year Ended", "Region", "Product", "Type", "Amount"].map((f) => (
                <FieldRow key={f}>
                  <CheckBox><CheckGlyph c="#777" w={9} sw={1.1} /></CheckBox>
                  {f}
                </FieldRow>
              ))}
              <MoreTables>More Tables...</MoreTables>
            </FieldList>
            <Dotted />
            <DragLabel>Drag fields between areas below:</DragLabel>
            <Areas>
              <AreaRow $line>
                <AreaCell $w={156} $left $pb={6}>
                  <AreaHead $h={20} $pb={4}><AreaIcon><FilterGlyph /></AreaIcon>Filters</AreaHead>
                  <AreaBox>
                    <AreaItem>Type<FlatCaret $c="#777" /></AreaItem>
                  </AreaBox>
                </AreaCell>
                <AreaCell $w={161}>
                  <AreaHead $h={20} $pb={4}><AreaIcon><ColumnsGlyph /></AreaIcon>Columns</AreaHead>
                  <AreaBox />
                </AreaCell>
              </AreaRow>
              <AreaRow>
                <AreaCell $w={156} $left>
                  <AreaHead $h={26} $pt={3}><AreaIcon><RowsGlyph /></AreaIcon>Rows</AreaHead>
                  <AreaBox>
                    <AreaItem>Product<FlatCaret $c="#777" /></AreaItem>
                    <AreaItem>Region<FlatCaret $c="#777" /></AreaItem>
                    <AreaItem>Year Ended<FlatCaret $c="#777" /></AreaItem>
                  </AreaBox>
                </AreaCell>
                <AreaCell $w={161}>
                  <AreaHead $h={26} $pt={3}><AreaIcon><SigmaGlyph /></AreaIcon>Values</AreaHead>
                  <AreaBox>
                    <AreaItem>Sum of Amount<FlatCaret $c="#777" /></AreaItem>
                  </AreaBox>
                </AreaCell>
              </AreaRow>
            </Areas>
            <PanelFooter>
              <DeferBox />
              <DeferText>Defer Layout Update</DeferText>
              <UpdateBtn>Update</UpdateBtn>
            </PanelFooter>
          </Panel>
        </Main>

        <StatusBar>
          <StatusText>Ready</StatusText>
          <ViewBtn $on><NormalView /></ViewBtn>
          <ViewBtn><PageView /></ViewBtn>
          <ViewBtn><BreakView /></ViewBtn>
          <Zoom>
            <ZoomMinus />
            <SliderTrack><SliderThumb /></SliderTrack>
            <ZoomPlus />
          </Zoom>
          <ZoomValue>100%</ZoomValue>
        </StatusBar>
      </Window>
    </>
  );
}
